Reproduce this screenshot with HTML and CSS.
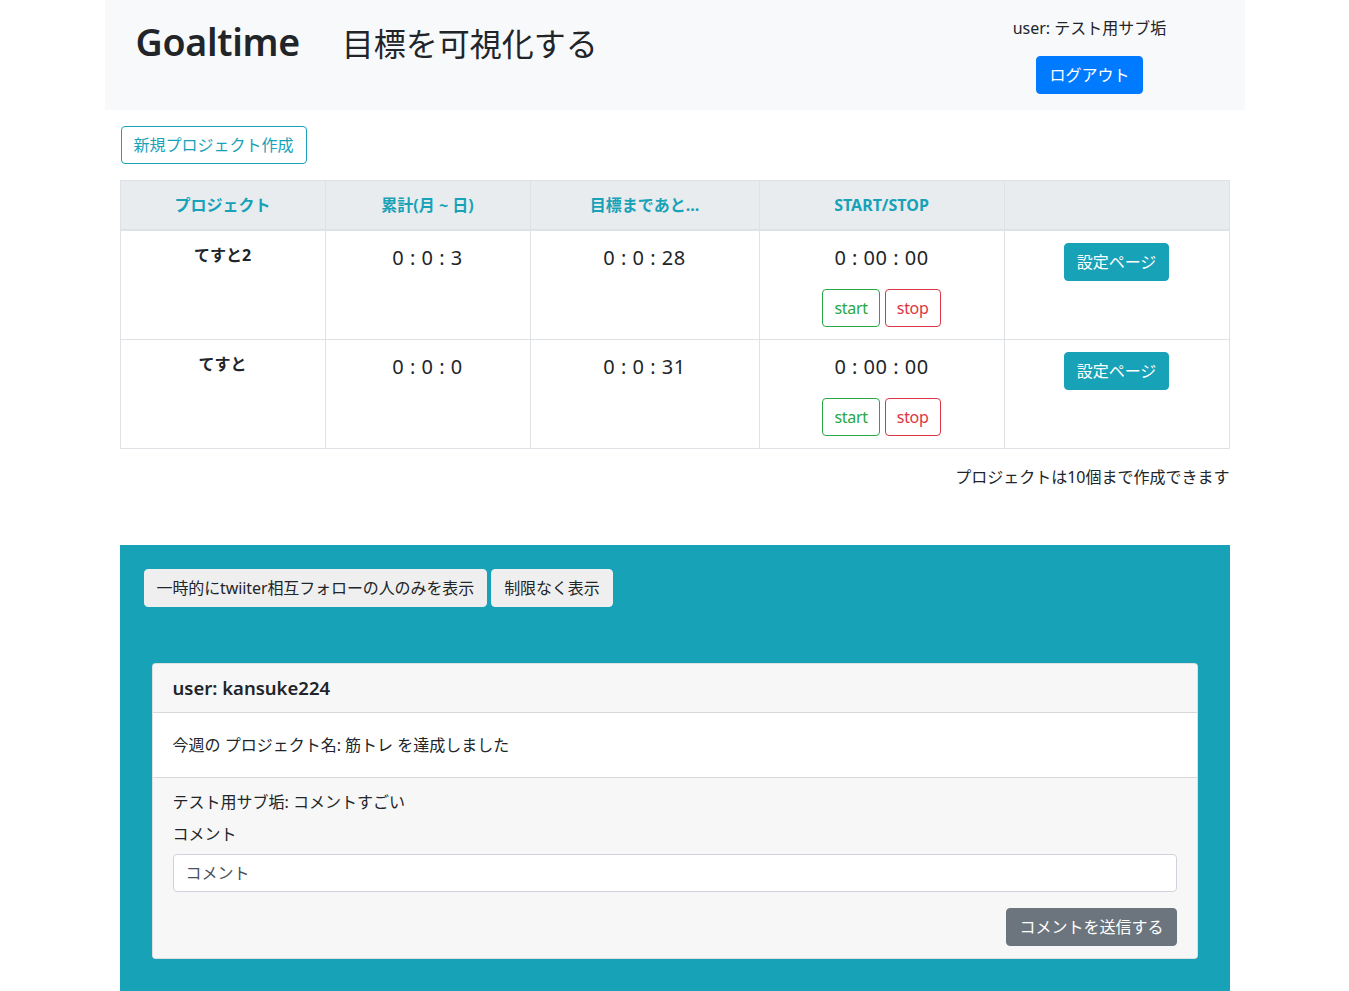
FILE: index.html
```html
<!DOCTYPE html>
<html lang="ja">
<head>
<meta charset="utf-8">
<title>Goaltime</title>
<link rel="stylesheet" href="styles.css">
</head>
<body>
<header class="site-header">
  <div class="brand">
    <h1 class="logo">Goaltime</h1>
    <span class="tagline">目標を可視化する</span>
  </div>
  <div class="account">
    <div class="account-name">user: テスト用サブ垢</div>
    <a class="btn btn-primary" href="#">ログアウト</a>
  </div>
</header>

<main class="container">
  <div class="new-project">
    <a class="btn btn-outline-info" href="#">新規プロジェクト作成</a>
  </div>

  <table class="projects">
    <colgroup>
      <col class="c1"><col class="c2"><col class="c3"><col class="c4"><col class="c5">
    </colgroup>
    <thead>
      <tr>
        <th>プロジェクト</th>
        <th>累計(月 ~ 日)</th>
        <th>目標まであと...</th>
        <th>START/STOP</th>
        <th></th>
      </tr>
    </thead>
    <tbody>
      <tr>
        <td class="name">てすと2</td>
        <td><div class="time">0 : 0 : 3</div></td>
        <td><div class="time">0 : 0 : 28</div></td>
        <td>
          <div class="time">0 : 00 : 00</div>
          <div class="timer-btns">
            <button class="btn btn-outline-success">start</button>
            <button class="btn btn-outline-danger">stop</button>
          </div>
        </td>
        <td><a class="btn btn-info" href="#">設定ページ</a></td>
      </tr>
      <tr>
        <td class="name">てすと</td>
        <td><div class="time">0 : 0 : 0</div></td>
        <td><div class="time">0 : 0 : 31</div></td>
        <td>
          <div class="time">0 : 00 : 00</div>
          <div class="timer-btns">
            <button class="btn btn-outline-success">start</button>
            <button class="btn btn-outline-danger">stop</button>
          </div>
        </td>
        <td><a class="btn btn-info" href="#">設定ページ</a></td>
      </tr>
    </tbody>
  </table>
  <p class="limit-note">プロジェクトは10個まで作成できます</p>

  <section class="feed">
    <div class="feed-filters">
      <button class="btn btn-light">一時的にtwiiter相互フォローの人のみを表示</button>
      <button class="btn btn-light">制限なく表示</button>
    </div>

    <div class="card">
      <div class="card-header">user: kansuke224</div>
      <div class="card-body">今週の プロジェクト名: 筋トレ を達成しました</div>
      <div class="card-footer">
        <p class="comment">テスト用サブ垢: コメントすごい</p>
        <label class="comment-label" for="comment">コメント</label>
        <input id="comment" class="form-control" type="text" placeholder="コメント">
        <div class="submit-row">
          <button class="btn btn-secondary">コメントを送信する</button>
        </div>
      </div>
    </div>
  </section>
</main>
</body>
</html>
```

FILE: styles.css
```css
* { box-sizing: border-box; }

html, body {
  margin: 0;
  padding: 0;
}

body {
  font-family: "Noto Sans", "Noto Sans CJK JP", sans-serif;
  font-size: 16px;
  line-height: 1.5;
  color: #212529;
  background: #fff;
}

.btn {
  display: inline-block;
  font-family: inherit;
  font-size: 16px;
  line-height: 1.5;
  padding: 6px 12px;
  border: 1px solid transparent;
  border-radius: 4px;
  text-decoration: none;
  background: transparent;
  cursor: pointer;
  white-space: nowrap;
  vertical-align: middle;
}

.btn-primary { background: #007bff; border-color: #007bff; color: #fff; }
.btn-info { background: #17a2b8; border-color: #17a2b8; color: #fff; }
.btn-outline-info { border-color: #17a2b8; color: #17a2b8; }
.btn-outline-success { border-color: #28a745; color: #28a745; }
.btn-outline-danger { border-color: #dc3545; color: #dc3545; }
.btn-light { background: #efefef; border-color: #efefef; color: #212529; letter-spacing: -0.1px; }
.btn-secondary { background: #6c757d; border-color: #6c757d; color: #fff; }

/* header */
.site-header {
  width: 1140px;
  height: 110px;
  margin: 0 auto;
  background: #f8f9fa;
  display: flex;
  justify-content: space-between;
  align-items: flex-start;
}

.brand {
  display: flex;
  align-items: baseline;
  padding: 18px 0 0 31px;
}

.logo {
  margin: 0;
  font-size: 37.5px;
  font-weight: 600;
  line-height: 48px;
  letter-spacing: -0.3px;
}

.tagline {
  margin-left: 42px;
  font-size: 32px;
  line-height: 48px;
}

.account {
  width: 200px;
  margin-right: 55px;
  padding-top: 16px;
  display: flex;
  flex-direction: column;
  align-items: center;
  gap: 16px;
}

.account-name { line-height: 24px; }

/* main */
.container {
  width: 1140px;
  margin: 0 auto;
  padding: 0 15px;
}

.new-project { padding: 16px 0 16px 1px; }

.projects {
  width: 100%;
  border-collapse: collapse;
  border: 1px solid #dee2e6;
  margin-bottom: 16px;
}

.projects .c1 { width: 205px; }
.projects .c2 { width: 205px; }
.projects .c3 { width: 229px; }
.projects .c4 { width: 245px; }

.projects th,
.projects td {
  border: 1px solid #dee2e6;
  padding: 12px;
  text-align: center;
  vertical-align: top;
}

.projects th {
  background: #e9ecef;
  color: #17a2b8;
  font-weight: 700;
  border-bottom-width: 2px;
}

.projects td.name { font-weight: 700; }

.time {
  font-size: 20px;
  line-height: 30px;
  letter-spacing: 0.5px;
}

.timer-btns {
  margin-top: 16px;
  display: flex;
  justify-content: center;
  gap: 5px;
}

.timer-btns .btn {
  padding: 6px 11px;
  letter-spacing: -0.3px;
}

.limit-note {
  margin: 0 0 56px;
  text-align: right;
}

/* feed */
.feed {
  background: #17a2b8;
  padding: 24px 32px 40px 24px;
  min-height: 460px;
}

.feed-filters {
  display: flex;
  gap: 4px;
  margin-bottom: 56px;
}

.card {
  margin-left: 8px;
  background: #fff;
  border: 1px solid rgba(0, 0, 0, 0.125);
  border-radius: 4px;
  overflow: hidden;
}

.card-header {
  background: #f7f7f7;
  padding: 12px 20px;
  font-size: 18.5px;
  font-weight: 600;
  line-height: 24px;
  border-bottom: 1px solid rgba(0, 0, 0, 0.125);
}

.card-body {
  padding: 20px;
  line-height: 24px;
}

.card-footer {
  background: #f7f7f7;
  padding: 12px 20px;
  border-top: 1px solid rgba(0, 0, 0, 0.125);
}

.comment { margin: 0 0 8px; }

.comment-label {
  display: block;
  margin-bottom: 8px;
}

.form-control {
  display: block;
  width: 100%;
  height: 38px;
  padding: 6px 12px;
  font-family: inherit;
  font-size: 16px;
  color: #495057;
  background: #fff;
  border: 1px solid #ced4da;
  border-radius: 4px;
}

.form-control::placeholder { color: #495057; opacity: 1; }

.submit-row {
  display: flex;
  justify-content: flex-end;
  margin-top: 16px;
}
```
